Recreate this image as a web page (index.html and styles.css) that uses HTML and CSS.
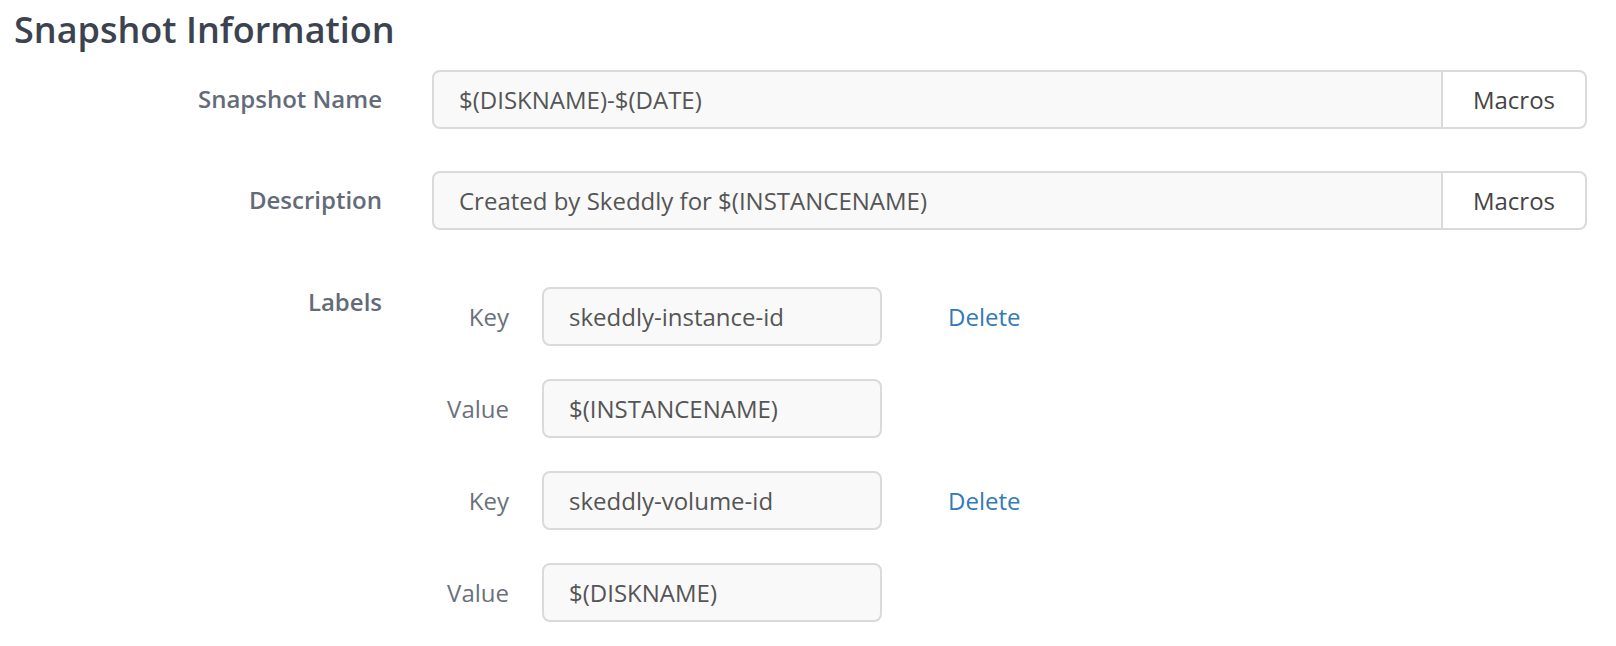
FILE: index.html
```html
<!DOCTYPE html>
<html>
<head>
<meta charset="utf-8">
<link rel="stylesheet" href="styles.css">
</head>
<body>
<div class="page">
  <h1 class="title">Snapshot Information</h1>
  <div class="form">
    <div class="row">
      <div class="label">Snapshot Name</div>
      <div class="group">
        <div class="field grow">$(DISKNAME)-$(DATE)</div>
        <div class="btn">Macros</div>
      </div>
    </div>
    <div class="row">
      <div class="label">Description</div>
      <div class="group">
        <div class="field grow">Created by Skeddly for $(INSTANCENAME)</div>
        <div class="btn">Macros</div>
      </div>
    </div>
    <div class="row labels-row">
      <div class="label">Labels</div>
      <div class="pairs">
        <div class="pair">
          <div class="sublabel">Key</div>
          <div class="field small">skeddly-instance-id</div>
          <a class="delete">Delete</a>
        </div>
        <div class="pair">
          <div class="sublabel">Value</div>
          <div class="field small">$(INSTANCENAME)</div>
        </div>
        <div class="pair">
          <div class="sublabel">Key</div>
          <div class="field small">skeddly-volume-id</div>
          <a class="delete">Delete</a>
        </div>
        <div class="pair">
          <div class="sublabel">Value</div>
          <div class="field small">$(DISKNAME)</div>
        </div>
      </div>
    </div>
  </div>
</div>
</body>
</html>
```
FILE: styles.css
```css
html, body {
  margin: 0;
  padding: 0;
  background: #ffffff;
}
body {
  font-family: "Open Sans", "Noto Sans", sans-serif;
}
.page {
  padding: 5px 29px 0 14px;
}
.title {
  margin: 0;
  font-size: 36px;
  font-weight: 600;
  line-height: normal;
  color: #3c4350;
}
.form {
  margin-top: 16px;
  display: flex;
  flex-direction: column;
  gap: 42px;
}
.row {
  display: flex;
  align-items: flex-start;
}
.label {
  width: 368px;
  margin-right: 50px;
  text-align: right;
  font-size: 24px;
  font-weight: 600;
  line-height: 58px;
  color: #646b78;
  flex: none;
}
.group {
  flex: 1;
  display: flex;
}
.field {
  box-sizing: border-box;
  height: 59px;
  border: 2px solid #dadada;
  border-radius: 8px;
  background: #f9f9f9;
  color: #555555;
  font-size: 24px;
  line-height: 55px;
  padding-left: 25px;
  white-space: nowrap;
}
.grow {
  flex: 1;
  border-radius: 8px 0 0 8px;
}
.btn {
  box-sizing: border-box;
  width: 144px;
  height: 59px;
  border: 2px solid #dadada;
  border-left: none;
  border-radius: 0 8px 8px 0;
  background: #ffffff;
  color: #444444;
  font-size: 24px;
  line-height: 55px;
  text-align: center;
}
.labels-row {
  margin-top: 1px;
}
.pairs {
  padding-top: 14px;
  display: flex;
  flex-direction: column;
  gap: 33px;
}
.pair {
  display: flex;
  align-items: center;
}
.sublabel {
  width: 77px;
  margin-right: 33px;
  text-align: right;
  font-size: 24px;
  color: #6b717c;
}
.small {
  width: 340px;
}
.delete {
  margin-left: 66px;
  font-size: 24px;
  color: #337ab7;
}
```
